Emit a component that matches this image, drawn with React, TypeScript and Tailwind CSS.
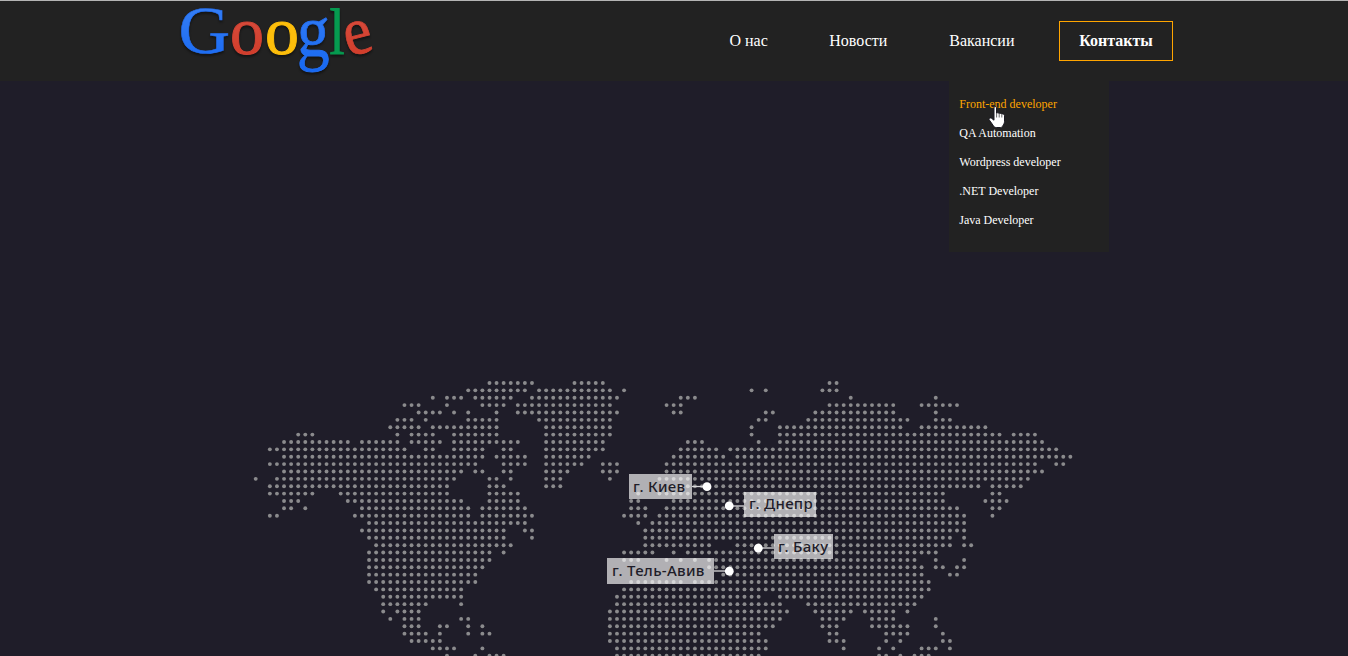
import React from "react";

type Span = [number, number];

const PITCH_X = 7.084;
const PITCH_Y = 7.372;
const ORIGIN_X = 255.7;
const ORIGIN_Y = 302;

// Each string is one row of the dotted map, listing inclusive column ranges.
const ROWS: string[] = [
  "33-39 45-49 81-82",
  "30-38 40-50 52 70 72 80-82",
  "25 27-29 31-36 39-51 60-62 84 96",
  "21-23 27 32-35 37-50 58-60 81-90 94-99",
  "23-26 28 30 34 37-51 59-60 72-73 79-90 96",
  "20-22 24 30-34 40-50 71-72 78-92 96-98",
  "19-23 25-34 41-50 70 74-91 94-103",
  "6-8 20 22-25 28-34 41-50 70 74-105 107-110",
  "4-13 15-20 22-26 28-37 41-49 61-63 71 74-111",
  "2-21 24-25 28-32 35-36 41-49 60-65 67-113",
  "4-32 34-38 41-47 59-66 68-115",
  "2-31 35-38 41-46 49-51 58-110 113-114",
  "4-29 31-32 35-36 41-44 49-51 58-111",
  "0 3-28 33-34 36 41-43 50 57-109",
  "2-27 33-35 41-43 59-102 104-108",
  "2-8 12-27 33-37 54 57-97 104-105",
  "4-6 13-29 33-37 53-54 59-97 103-106",
  "4-5 7 15-30 32-38 53-55 58-99 104-105",
  "2-3 14-30 32-39 52-55 57-100 104",
  "16-38 54 56-100",
  "15-35 38-39 55-100",
  "16-35 39 55-98 100",
  "17-36 55-64 68-98 100-101",
  "16-33 35 52-56 59 61-96",
  "16-33 52-54 58 60 62 64-93 96 100",
  "16-32 64-94 96-97 99-100",
  "16-31 66-94 98-99",
  "16-31 53-60 62-95",
  "17-29 52-95",
  "18-29 51-71 74-94",
  "18-24 29 51-74 78-93",
  "18 20-23 50-75 79-84 86-90 92",
  "19 21-23 29-30 50-74 80-83 87-90 96",
  "21-23 26-27 30 32 50-73 80-82 87-92 96",
  "21-24 26 30 32-33 50-71 81-82 89-92 97",
  "22-26 50-72 81-83 89 91 97-98",
  "25-28 32 51-72 83 88 90 94-96 98",
  "27 31 33-35 51-71 88-89 91 93-95",
];

const parseRow = (row: string): Span[] =>
  row.split(" ").map((part) => {
    const [from, to] = part.split("-").map(Number);
    return [from, to ?? from] as Span;
  });

function DotMap() {
  const dots: React.ReactNode[] = [];
  ROWS.forEach((row, r) => {
    parseRow(row).forEach(([from, to]) => {
      for (let c = from; c <= to; c++) {
        dots.push(
          <circle key={`${r}-${c}`} cx={ORIGIN_X + c * PITCH_X} cy={ORIGIN_Y + r * PITCH_Y} r="1.95" />
        );
      }
    });
  });
  return (
    <svg className="block h-[575px] w-[1348px]" viewBox="0 0 1348 575" fill="#8b8b8d">
      {dots}
      <g stroke="#d8d8da" strokeWidth="1.3">
        <path d="M692 405.5H707" />
        <path d="M729 425H744" />
        <path d="M758 467H774" />
        <path d="M714 490H729" />
      </g>
      <g fill="#ffffff">
        <circle cx="707" cy="405.7" r="4.4" />
        <circle cx="729.2" cy="424.9" r="4.4" />
        <circle cx="758.3" cy="467.2" r="4.4" />
        <circle cx="729.3" cy="490.2" r="4.4" />
      </g>
    </svg>
  );
}

const CITIES = [
  { name: "г. Киев", place: "left-[629px] top-[393px] w-[63px] h-[25px] pl-[4px]" },
  { name: "г. Днепр", place: "left-[744px] top-[411px] w-[72px] h-[25px] pl-[5px] pb-[2px]" },
  { name: "г. Баку", place: "left-[774px] top-[453px] w-[59px] h-[25px] pl-[4px]" },
  { name: "г. Тель-Авив", place: "left-[607px] top-[477px] w-[107px] h-[26px] pl-[5px] pb-[2px]" },
];

function Logo() {
  return (
    <svg
      className="block h-[80px] w-[200px] overflow-visible [filter:drop-shadow(0_2px_1px_rgba(0,0,0,0.45))]"
      viewBox="0 0 200 80"
      fontFamily="'Liberation Serif', serif"
      fontSize="68"
      aria-label="Google"
    >
      <defs>
        <linearGradient id="blue" x1="0" y1="0" x2="0" y2="1">
          <stop offset="0" stopColor="#3c83f6" />
          <stop offset="1" stopColor="#1668f2" />
        </linearGradient>
        <linearGradient id="red" x1="0" y1="0" x2="0" y2="1">
          <stop offset="0" stopColor="#dc5548" />
          <stop offset="1" stopColor="#cf3824" />
        </linearGradient>
      </defs>
      <text fill="url(#blue)" stroke="#246ff2" strokeWidth="0.6" transform="translate(1.6 52.2) scale(1.05 1.01)">G</text>
      <text x="53" y="52.5" fill="url(#red)" stroke="#d24334" strokeWidth="1">o</text>
      <text x="88" y="52.5" fill="#fdbe0b" stroke="#fdbe0b" strokeWidth="1">o</text>
      <text fill="url(#blue)" stroke="#246ff2" strokeWidth="0.8" transform="translate(120 54.5) scale(0.96 1.1)">g</text>
      <text fill="#069a50" stroke="#069a50" strokeWidth="1" transform="translate(152.6 52.5) scale(0.8 0.96)">l</text>
      <text fill="url(#red)" stroke="#d24334" strokeWidth="0.8" transform="rotate(-14 181 37) translate(167 52.5) scale(0.93 1)">e</text>
    </svg>
  );
}

const VACANCIES = ["Front-end developer", "QA Automation", "Wordpress developer", ".NET Developer", "Java Developer"];

function HandCursor() {
  return (
    <svg className="absolute left-[39px] top-[25px] h-[24px] w-[18px]" viewBox="0 0 18 24">
      <path
        d="M6 1.7C6 .9 6.6.5 7.2.5s1.3.4 1.3 1.2v5.4c.3-.5 2.2-.5 2.5.5.5-.5 2.2-.4 2.5.6.9-.5 3-.2 3 1.5v5.6c0 2.3-1 3.5-1.8 4.6-.6 1-.9 1.6-2.2 1.6H8.3c-1.6 0-2.2-.6-3-1.9L1.2 13.8c-.8-1.1 1-2.5 2.3-1.5L6 14.2z"
        fill="#fff"
        stroke="#1b1a22"
        strokeWidth="1"
      />
      <path d="M8.6 7v4.5M11.2 8v3.5M13.8 9v2.5" stroke="#555" strokeWidth="0.9" />
    </svg>
  );
}

export default function App() {
  return (
    <div className="flex h-[656px] w-[1348px] flex-col overflow-hidden bg-[#1f1d29] font-['Liberation_Serif',serif] text-white">
      <header className="relative z-10 flex h-[81px] shrink-0 justify-between border-t border-[#b4b4b4] bg-[#222222] pl-[177px] pr-[175px]">
        <Logo />
        <nav className="flex items-center text-base">
          <a className="mr-[61.5px]">О нас</a>
          <a className="mr-[62px]">Новости</a>
          <div className="relative mr-[44.5px] flex h-full items-center">
            <a>Вакансии</a>
            <ul className="absolute left-0 top-[80px] flex h-[171px] w-[160px] flex-col bg-[#222222] pl-[10px] pt-[8px] text-xs">
              {VACANCIES.map((name, i) => (
                <li
                  key={name}
                  className={
                    i === 0
                      ? "flex h-[29px] items-center whitespace-nowrap text-[#ffa500]"
                      : "flex h-[29px] items-center whitespace-nowrap"
                  }
                >
                  {name}
                </li>
              ))}
              <HandCursor />
            </ul>
          </div>
          <a className="flex h-[40px] w-[114px] items-center justify-center border border-[#ffa500] font-bold">Контакты</a>
        </nav>
      </header>
      <main className="relative h-[575px]">
        <DotMap />
        {CITIES.map((city) => (
          <div
            key={city.name}
            className={`absolute flex items-center whitespace-nowrap bg-white/65 font-['Noto_Sans',sans-serif] text-[15px] font-medium tracking-[0.3px] text-[#1f1d29] ${city.place}`}
          >
            {city.name}
          </div>
        ))}
      </main>
    </div>
  );
}
